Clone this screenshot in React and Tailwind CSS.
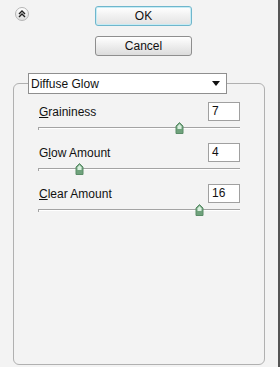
import React from "react";

function Thumb() {
  return (
    <svg width="9" height="12" viewBox="0 0 9 12">
      <path d="M4.5 0.5 L8 4 L8 11.5 L1 11.5 L1 4 Z" fill="#6fa27c" stroke="#5a8c67" />
      <path d="M4.5 2 L6.5 4.2 L6.5 7 L2.5 7 L2.5 4.2 Z" fill="#d8eedd" />
    </svg>
  );
}

function Slider({ pos }) {
  return (
    <div className="relative h-[12px] ml-[24px] mr-[24px]">
      <div className="absolute left-0 right-0 top-[5px] h-[1px] bg-[#a3a3a3]" />
      <div className="absolute left-0 right-0 top-[6px] h-[1px] bg-white" />
      <div className="absolute left-0 top-[5px] h-[3px] w-[1px] bg-[#a3a3a3]" />
      <div className="absolute top-0" style={{ left: pos }}>
        <Thumb />
      </div>
    </div>
  );
}

function Row({ label, mnemonic, rest, value, pos, top }) {
  return (
    <div className={top}>
      <div className="flex items-center justify-between pl-[25px] pr-[24px]">
        <span>
          {label}
          <span className="underline">{mnemonic}</span>
          {rest}
        </span>
        <div className="w-[32px] h-[19px] border border-[#a0a0a0] bg-white pl-[3px] leading-[17px]">
          {value}
        </div>
      </div>
      <div className="mt-[1px]">
        <Slider pos={pos} />
      </div>
    </div>
  );
}

export default function App() {
  return (
    <div
      className="w-[280px] h-[367px] bg-[#f3f3f3] border-r-2 border-[#555555] text-[12px] text-[#111] overflow-hidden"
      style={{ fontFamily: '"Liberation Sans", Arial, sans-serif' }}
    >
      <div className="flex items-start pt-[6px] pl-[15px]">
        <div className="mt-[1px] w-[14px] h-[14px] rounded-full border border-[#b5b5b5] bg-gradient-to-b from-white to-[#dedede] flex items-center justify-center">
          <svg width="8" height="8" viewBox="0 0 8 8">
            <path d="M1 4 L4 1 L7 4 M1 7 L4 4 L7 7" fill="none" stroke="#222" strokeWidth="1.4" />
          </svg>
        </div>
        <div className="ml-[66px] flex flex-col gap-[10px]">
          <div className="w-[97px] h-[20px] rounded-[3px] border border-[#6fb6cc] bg-gradient-to-b from-white to-[#e2e2e2] shadow-[inset_0_0_0_1px_#c6ecf5] flex items-center justify-center">
            OK
          </div>
          <div className="w-[97px] h-[20px] rounded-[3px] border border-[#8e8e8e] bg-gradient-to-b from-white to-[#dcdcdc] flex items-center justify-center">
            Cancel
          </div>
        </div>
      </div>

      <div className="mt-[27px] ml-[13px] w-[252px] h-[282px] rounded-[6px] border border-[#b0b0b0]">
        <div className="-mt-[11px] ml-[14px] w-[199px] h-[21px] border border-[#8f8f8f] bg-white flex items-center justify-between pl-[2px] pr-[6px]">
          <span>Diffuse Glow</span>
          <svg width="8" height="5" viewBox="0 0 8 5">
            <path d="M0 0 L8 0 L4 5 Z" fill="#111" />
          </svg>
        </div>

        <Row top="mt-[8px]" label="" mnemonic="G" rest="raininess" value="7" pos={137} />
        <Row top="mt-[9px]" label="G" mnemonic="l" rest="ow Amount" value="4" pos={37} />
        <Row top="mt-[9px]" label="" mnemonic="C" rest="lear Amount" value="16" pos={157} />
      </div>
    </div>
  );
}
